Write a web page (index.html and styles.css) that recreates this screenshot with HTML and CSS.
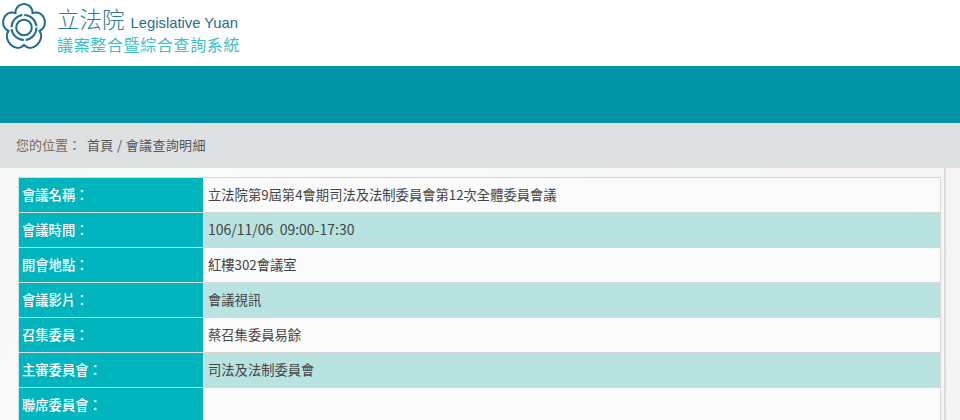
FILE: index.html
```html
<!DOCTYPE html>
<html lang="zh-Hant">
<head>
<meta charset="utf-8">
<title>議案整合暨綜合查詢系統</title>
<link rel="stylesheet" href="styles.css">
</head>
<body>
<header class="site-header">
  <svg class="logo" viewBox="0 0 48 54" aria-hidden="true">
    <path class="logo-petals" d="M15.500 13C15.500 1 32.500 1 32.500 13C44 9 50 26 39.500 31C46 40 32 54 24 45C16 54 2 40 8.500 31C-2 26 4 9 15.500 13Z"/>
    <circle class="logo-ring" cx="24" cy="27.500" r="12.500" stroke-dasharray="17.800 1.800"/>
    <circle class="logo-ring" cx="24" cy="27.500" r="7.800"/>
  </svg>
  <div class="brand">
    <div class="brand-top"><span class="brand-zh">立法院</span><span class="brand-en">Legislative Yuan</span></div>
    <div class="brand-sub">議案整合暨綜合查詢系統</div>
  </div>
</header>
<div class="nav-bar"></div>
<div class="crumbs">您的位置：<span class="crumb-links">首頁 / 會議查詢明細</span></div>
<main class="panel">
  <table class="detail">
    <tr><th>會議名稱：</th><td>立法院第9屆第4會期司法及法制委員會第12次全體委員會議</td></tr>
    <tr class="alt"><th>會議時間：</th><td class="time">106/11/06&nbsp; 09:00-17:30</td></tr>
    <tr><th>開會地點：</th><td>紅樓302會議室</td></tr>
    <tr class="alt"><th>會議影片：</th><td>會議視訊</td></tr>
    <tr><th>召集委員：</th><td>蔡召集委員易餘</td></tr>
    <tr class="alt"><th>主審委員會：</th><td>司法及法制委員會</td></tr>
    <tr><th>聯席委員會：</th><td></td></tr>
  </table>
</main>
</body>
</html>
```
FILE: styles.css
```css
* { box-sizing: border-box; }
html, body { margin: 0; height: 420px; overflow: hidden; }
body {
  background: linear-gradient(115deg, #f6f6f5 0%, #fbfbfb 25%, #f8f8f7 60%, #f6f5f3 100%);
  font-family: "Noto Sans CJK TC", "Liberation Sans", sans-serif;
  font-size: 13.3px;
  color: #333;
}
.site-header {
  height: 66px;
  background: #fff;
  display: flex;
  align-items: flex-start;
}
.logo { width: 48px; height: 54px; margin-right: 9px; flex: none; }
.logo-petals, .logo-ring { fill: none; stroke: #1f6f8b; }
.logo-petals { stroke-width: 2; }
.logo-ring { stroke-width: 2; }
.brand { padding-top: 3px; }
.brand-top { display: flex; align-items: baseline; height: 30px; color: #2b7a90; }
.brand-zh { font-size: 22.500px; line-height: 30px; font-weight: 300; }
.brand-en { font-family: "Liberation Sans", sans-serif; font-size: 14.800px; margin-left: 6px; color: #256f87; }
.brand-sub { font-size: 16px; line-height: 22px; letter-spacing: .65px; color: #3cc0c8; white-space: nowrap; }
.nav-bar { height: 57px; background: #0093a5; }
.crumbs {
  height: 45px;
  background: #dee1e2;
  padding-left: 16px;
  line-height: 44px;
  font-size: 13px;
  color: #7a6a55;
  white-space: pre;
}
.crumb-links { color: #555; margin-left: 6px; letter-spacing: .35px; }
.panel {
  margin: 0 14px;
  width: 932px;
  height: 252px;
  padding: 9px 4px 0;
  border-right: 2px solid #dcdcdc;
}
.detail { width: 923px; border-collapse: collapse; table-layout: fixed; background: #fafbfa; }
.detail tr { height: 35px; }
.detail th, .detail td { border: 1px solid #d8d8d8; padding: 0 4px 2px; font-weight: 400; text-align: left; }
.detail th { width: 185px; padding-left: 3px; padding-bottom: 1px; background: #00b5be; color: #fff; border-color: #dcdcdc; font-weight: 500; }
.detail td { color: #444; }
.detail .alt td { background: #b9e3e1; }
.detail .time { font-size: 14px; }
```
